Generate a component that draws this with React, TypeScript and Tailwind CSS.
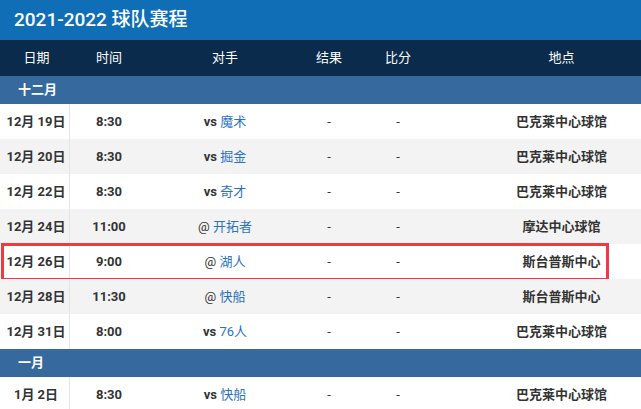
import React from "react";

interface Game {
  date: string;
  time: string;
  prefix: string;
  team: string;
  venue: string;
  highlight?: boolean;
}

const december: Game[] = [
  { date: "12月 19日", time: "8:30", prefix: "vs", team: "魔术", venue: "巴克莱中心球馆" },
  { date: "12月 20日", time: "8:30", prefix: "vs", team: "掘金", venue: "巴克莱中心球馆" },
  { date: "12月 22日", time: "8:30", prefix: "vs", team: "奇才", venue: "巴克莱中心球馆" },
  { date: "12月 24日", time: "11:00", prefix: "@", team: "开拓者", venue: "摩达中心球馆" },
  { date: "12月 26日", time: "9:00", prefix: "@", team: "湖人", venue: "斯台普斯中心", highlight: true },
  { date: "12月 28日", time: "11:30", prefix: "@", team: "快船", venue: "斯台普斯中心" },
  { date: "12月 31日", time: "8:00", prefix: "vs", team: "76人", venue: "巴克莱中心球馆" },
];

const january: Game[] = [
  { date: "1月 2日", time: "8:30", prefix: "vs", team: "快船", venue: "巴克莱中心球馆" },
];

const grid = "grid grid-cols-[70px_78px_154px_54px_84px_1fr] items-center";

function Row({ game, index }: { game: Game; index: number }) {
  return (
    <div className={`relative ${grid} h-[35px] ${index % 2 === 1 ? "bg-[#f3f3f3]" : "bg-white"}`}>
      <div className="h-full flex items-center justify-center pl-[3px] border-r border-[#e4e4e4] font-bold text-[13px] text-[#333]">
        {game.date}
      </div>
      <div className="text-center font-bold text-[13px] text-[#333]">{game.time}</div>
      <div className="text-center text-[13px]">
        <span className={game.prefix === "vs" ? "font-bold text-[#333]" : "text-[#333]"}>{game.prefix}</span>{" "}
        <span className="text-[#2c72c0]">{game.team}</span>
      </div>
      <div className="text-center text-[13px] text-[#333]">-</div>
      <div className="text-center text-[13px] text-[#333]">-</div>
      <div className="text-center pl-[42px] font-bold text-[13px] text-[#333]">{game.venue}</div>
      {game.highlight && (
        <div className="absolute left-[1px] top-[-1px] w-[608px] h-[38px] border-[3px] border-[#f03a40]" />
      )}
    </div>
  );
}

function Month({ label }: { label: string }) {
  return (
    <div className="h-[28px] bg-[#36699d] flex items-center pl-[18px] font-bold text-[13px] text-white">
      {label}
    </div>
  );
}

export default function App() {
  return (
    <div
      className="w-[641px] h-[409px] overflow-hidden bg-white"
      style={{ fontFamily: 'Roboto, "Noto Sans CJK SC", sans-serif' }}
    >
      <div className="h-[40px] bg-[#106eb6] flex items-center pl-[14px] text-[19px] font-medium text-white">
        2021-2022 球队赛程
      </div>
      <div className={`${grid} h-[36px] bg-[#0a2b4c] text-[13px] text-white`}>
        <div className="text-center pl-[3px]">日期</div>
        <div className="text-center">时间</div>
        <div className="text-center">对手</div>
        <div className="text-center">结果</div>
        <div className="text-center">比分</div>
        <div className="text-center pl-[42px]">地点</div>
      </div>
      <Month label="十二月" />
      {december.map((g, i) => (
        <Row key={g.date} game={g} index={i} />
      ))}
      <Month label="一月" />
      {january.map((g, i) => (
        <Row key={g.date} game={g} index={i} />
      ))}
    </div>
  );
}
